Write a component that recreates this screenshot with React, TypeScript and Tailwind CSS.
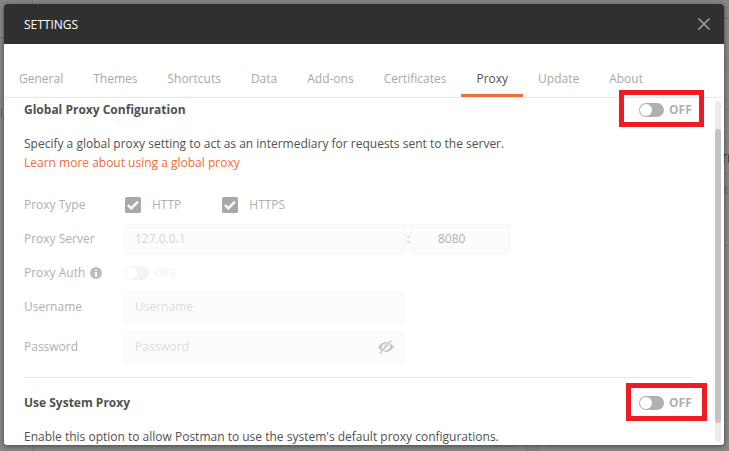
import React from "react";

const tabs = ["General", "Themes", "Shortcuts", "Data", "Add-ons", "Certificates", "Proxy", "Update", "About"];

function Toggle() {
  return (
    <div className="flex items-center">
      <div className="flex h-[14px] w-[25px] items-center rounded-full bg-[#b0b0b0] p-px">
        <div className="size-3 rounded-full bg-white" />
      </div>
      <span className="ml-[5px] w-[23px] font-bold leading-5 text-[#b0b0b0]">OFF</span>
    </div>
  );
}

function Checkbox({ label }: { label: string }) {
  return (
    <div className="flex items-center">
      <svg className="size-4" viewBox="0 0 16 16">
        <rect width="16" height="16" rx="1.5" fill="#a9a9a9" />
        <path d="M3 8.1 L6.3 11.4 L13 4.6" fill="none" stroke="#fff" strokeWidth="2.4" />
      </svg>
      <span className="ml-[11px]">{label}</span>
    </div>
  );
}

function Row({ label, className, children }: { label: React.ReactNode; className: string; children: React.ReactNode }) {
  return (
    <div className={`flex items-center leading-[18px] ${className}`}>
      <div className="flex w-[100px] items-center">{label}</div>
      {children}
    </div>
  );
}

const field = "flex h-[30px] items-center rounded-[3px] border border-[#f5f5f5] bg-[#fcfcfc]";

export default function App() {
  return (
    <div className="relative h-[451px] w-[729px] overflow-hidden bg-[#878787] font-['Open_Sans',sans-serif] text-[12px] leading-[19px] text-[#505050]">
      <svg className="absolute inset-0" width="729" height="451" fill="none">
        <path d="M32.5 0V451M0 37.5H5M724 7.5H729M724 18.5H729M724 57.5H729M724 68.5H729M724 109.5H729M724 142.5H729M724 173.5H729M724 204.5H729M724 245.5H729" stroke="#7a7a7a" />
        <path d="M1.5 108V117" stroke="#666" />
        <path d="M494 446.5H515M526.5 440V449.5H538.5V440M548 445L551 447L554 445" stroke="#787878" />
      </svg>
      <span className="absolute left-[720px] top-[149px] font-bold text-[#454545]">TI</span>
      <span className="absolute left-[724px] top-[180px] text-[#656565]">ti</span>

      <div className="absolute left-1 top-1 flex h-[441px] w-[720px] flex-col overflow-hidden rounded-[3px] bg-white shadow-[0_1px_5px_rgba(0,0,0,0.5)]">
        <header className="flex h-10 shrink-0 items-center justify-between bg-[#303030] pl-5 pr-[14px] text-white">
          <span>SETTINGS</span>
          <svg className="size-3" viewBox="0 0 12 12">
            <path d="M.5 .5 11.5 11.5M11.5 .5 .5 11.5" stroke="#969696" strokeWidth="1.7" />
          </svg>
        </header>
        <nav className="flex h-[54px] shrink-0 border-b border-[#e8e8e8] text-[#a9a9a9]">
          {tabs.map((tab) => (
            <div
              key={tab}
              className={
                tab === "Proxy"
                  ? "flex h-[53px] border-b-[3px] border-[#f26b3a] px-[15px] pt-[25px] text-[#505050]"
                  : "flex h-[53px] px-[15px] pt-[25px]"
              }
            >
              {tab}
            </div>
          ))}
        </nav>
        <div className="flex min-h-0 flex-1 justify-between pr-[3px]">
          <main className="w-[688px] pl-5">
            <div className="mt-[2px] flex h-5 items-center justify-between">
              <h2 className="leading-5 font-bold">Global Proxy Configuration</h2>
              <Toggle />
            </div>
            <p className="mt-[14px]">Specify a global proxy setting to act as an intermediary for requests sent to the server.</p>
            <p className="text-[#f26b3a]">Learn more about using a global proxy</p>
            <div className="text-[#b0b0b0]">
              <Row label="Proxy Type" className="mt-[18px] h-[30px]">
                <div className="ml-px flex gap-[41px]">
                  <Checkbox label="HTTP" />
                  <Checkbox label="HTTPS" />
                </div>
              </Row>
              <Row label="Proxy Server" className="mt-1 h-[30px]">
                <div className={`${field} w-[282px] pl-[10px] text-[#d5d5d5]`}>127.0.0.1</div>
                <span className="w-1 text-center">:</span>
                <div className={`${field} w-[100px] pl-[27px]`}>8080</div>
              </Row>
              <Row
                label={
                  <>
                    Proxy Auth
                    <svg className="ml-[5px] size-3" viewBox="0 0 12 12">
                      <circle cx="6" cy="6" r="6" fill="#bdbdbd" />
                      <path d="M5.2 2.5H6.9V4H5.2zM4.7 5H6.9V8.5H7.5V9.5H4.6V8.5H5.2V6H4.7z" fill="white" />
                    </svg>
                  </>
                }
                className="mt-1 h-[30px]"
              >
                <div className="flex h-[14px] w-[25px] items-center rounded-full bg-[#f3f3f3] p-px">
                  <div className="size-3 rounded-full bg-white" />
                </div>
                <span className="ml-[5px] font-bold text-[#f5f5f5]">OFF</span>
              </Row>
              <Row label="Username" className="mt-1 h-[30px]">
                <div className={`${field} w-[280px] pl-[10px] text-[#dcdcdc]`}>Username</div>
              </Row>
              <Row label="Password" className="mt-[10px] h-[30px]">
                <div className={`${field} w-[280px] justify-between pl-[10px] pr-[9px] text-[#dcdcdc]`}>
                  Password
                  <svg width="16" height="14" viewBox="0 0 16 14" fill="none">
                    <path fillRule="evenodd" d="M0 7Q3.3 2 8 2T16 7Q12.7 12 8 12T0 7ZM4.3 5.5Q3.5 8 5.2 10Q10.8 10.8 11.8 7Q12 5 10.8 3.8Q6 2.7 4.3 5.5Z" fill="#c9c9c9" />
                    <path d="M8 4.4A2.6 2.6 0 0 0 5.6 7L8 5.8Z" fill="#c9c9c9" />
                    <path d="M3.5 13.7 14.7 .7" stroke="#fcfcfc" strokeWidth="1.2" />
                    <path d="M2 13.5 13.3 .5" stroke="#c9c9c9" strokeWidth="1.6" />
                  </svg>
                </div>
              </Row>
            </div>
            <div className="mt-[15px] border-t border-[#e8e8e8]" />
            <div className="mt-[15px] flex h-5 items-center justify-between">
              <h2 className="leading-5 font-bold">Use System Proxy</h2>
              <Toggle />
            </div>
            <p className="mt-[14px]">Enable this option to allow Postman to use the system's default proxy configurations.</p>
          </main>
          <div className="mt-[3px] h-10 min-h-[341px] w-1.5 rounded-full bg-[#ebebeb] pt-7">
            <div className="h-[294px] rounded-full bg-[#c4c4c4]" />
          </div>
        </div>
      </div>
      <div className="absolute left-[619px] top-[90px] h-[37px] w-[85px] border-[5px] border-[#ed1c24]" />
      <div className="absolute left-[626px] top-[383px] h-[38px] w-[81px] border-[5px] border-[#ed1c24]" />
    </div>
  );
}
